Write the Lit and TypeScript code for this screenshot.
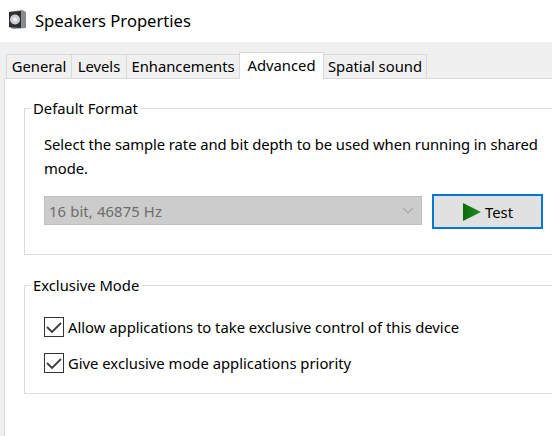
import { LitElement, html, css } from "lit";
import { customElement } from "lit/decorators.js";

const check = html`<svg class="tick" viewBox="0 0 20 20" width="20" height="20"><path d="M3 10 L8 15 L17 6" fill="none" stroke="#3c3c3c" stroke-width="1.8"/></svg>`;

@customElement("app-root")
export class AppRoot extends LitElement {
  static styles = css`
    :host { display: block; width: 552px; height: 436px; overflow: hidden; background: #f0f0f0;
      font-family: "Noto Sans", "Open Sans", sans-serif; font-size: 14.8px; color: #000; }
    .title { height: 42px; background: #fff; display: flex; align-items: center; gap: 8px; padding-left: 8px; box-sizing: border-box; }
    .title svg { display: block; flex: none; margin-top: -4px; }
    .title span { font-size: 16.6px; line-height: 24px; }
    .tabs { display: flex; align-items: flex-end; height: 36px; padding-left: 6px; box-sizing: border-box; position: relative; z-index: 1; }
    .tab { box-sizing: border-box; height: 24px; border: 1px solid #d9d9d9; border-bottom: none; margin-right: -1px; background: #f0f0f0; text-align: center; line-height: 22px; white-space: nowrap; }
    .tab.active { height: 27px; background: #fff; line-height: 25px; position: relative; margin-bottom: -1px; }
    .panel { margin-left: 4px; background: #fff; border-top: 1px solid #d9d9d9; border-left: 1px solid #d9d9d9; height: 358px; padding: 19px 0 0 19px; box-sizing: border-box; }
    fieldset { margin: 0; padding: 0 0 0 19px; border: 1px solid #dcdcdc; border-right: none; min-width: 0; box-sizing: border-box; }
    legend { padding: 0 2px; margin-left: -13px; line-height: 20px; }
    .fmt { height: 157px; margin-bottom: 20px; }
    .desc { margin: 14px 0 0; width: 503px; line-height: 24px; height: 48px; letter-spacing: -0.06px; }
    .row { display: flex; align-items: flex-start; margin-top: 16px; }
    .select { box-sizing: border-box; width: 378px; height: 29px; background: #cccccc; border: 1px solid #bfbfbf; color: #6d6d6d; letter-spacing: 0.13px; display: flex; align-items: center; justify-content: space-between; padding: 0 7px 0 4px; }
    .select svg { display: block; }
    .btn { box-sizing: border-box; width: 111px; height: 35px; margin: -2px 0 0 10px; background: #e1e1e1; border: 2px solid #0078d7; display: flex; align-items: center; justify-content: center; gap: 4px; padding-left: 1px; }
    .btn svg { display: block; }
    .exc { height: 119px; }
    .cks { display: flex; flex-direction: column; gap: 16px; padding-top: 22px; }
    .ck { display: flex; align-items: center; gap: 4px; height: 20px; white-space: nowrap; }
    .box { box-sizing: border-box; width: 20px; height: 20px; border: 1px solid #333; background: #fff; flex: none; position: relative; }
    .tick { display: block; position: absolute; left: -1px; top: -1px; }
  `;

  render() {
    const tabs: [string, number, boolean][] = [
      ["General", 66, false], ["Levels", 56, false], ["Enhancements", 114, false],
      ["Advanced", 85, true], ["Spatial sound", 104, false],
    ];
    return html`
      <div class="title">
        <svg width="19" height="20" viewBox="0 0 19 20">
          <path d="M1 3 L14 1 L18 3 V19 L5 20 L1 18 Z" fill="#8a8a8a"/>
          <path d="M1 3 L13 2 V19 L1 18 Z" fill="#2e2e2e"/>
          <circle cx="7" cy="10.5" r="5" fill="#c9ced2"/>
          <circle cx="7" cy="10.5" r="2" fill="#eef0f2"/>
        </svg>
        <span>Speakers Properties</span>
      </div>
      <div class="tabs">
        ${tabs.map(([t, w, a]) => html`<div class="tab ${a ? "active" : ""}" style="width:${w}px">${t}</div>`)}
      </div>
      <div class="panel">
        <fieldset class="fmt">
          <legend>Default Format</legend>
          <p class="desc">Select the sample rate and bit depth to be used when running in shared mode.</p>
          <div class="row">
            <div class="select">
              <span>16 bit, 46875 Hz</span>
              <svg width="12" height="7" viewBox="0 0 12 7"><path d="M1 1 L6 6 L11 1" fill="none" stroke="#a6a6a6" stroke-width="1.2"/></svg>
            </div>
            <div class="btn">
              <svg width="18" height="18" viewBox="0 0 18 18"><defs><linearGradient id="g" x1="0" x2="1"><stop offset="0" stop-color="#0c6a0c"/><stop offset="1" stop-color="#1f8f1f"/></linearGradient></defs><path d="M0 0 L18 9 L0 18 Z" fill="url(#g)"/></svg>
              <span>Test</span>
            </div>
          </div>
        </fieldset>
        <fieldset class="exc">
          <legend>Exclusive Mode</legend>
          <div class="cks">
            <div class="ck"><div class="box">${check}</div><span>Allow applications to take exclusive control of this device</span></div>
            <div class="ck"><div class="box">${check}</div><span>Give exclusive mode applications priority</span></div>
          </div>
        </fieldset>
      </div>
    `;
  }
}
